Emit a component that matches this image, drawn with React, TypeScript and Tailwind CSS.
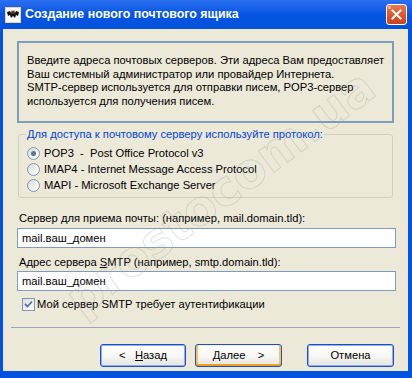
import React from 'react';

const font = "font-['Liberation_Sans',Arial,sans-serif]";

function BatIcon() {
  return (
    <svg width="16" height="16" viewBox="0 0 16 16" className="shrink-0">
      <rect x="0" y="0" width="16" height="16" fill="#fff" />
      <rect x="0.5" y="0.5" width="15" height="15" fill="none" stroke="#f0a020" strokeDasharray="1 1" />
      <path
        d="M2 5 L5 4 L6 6 L7 3 L8 5 L9 3 L10 6 L11 4 L14 5 L13 9 L11 8 L10 11 L8 9 L6 11 L5 8 L3 9 Z"
        fill="#111"
      />
      <circle cx="7" cy="6" r="0.6" fill="#f0a020" />
      <circle cx="9" cy="6" r="0.6" fill="#f0a020" />
    </svg>
  );
}

function CloseButton() {
  return (
    <div className="w-[21px] h-[21px] rounded-[3px] border border-white bg-gradient-to-b from-[#e8784f] via-[#e0582b] to-[#c94418] flex items-center justify-center relative">
      <div className="absolute left-[1px] top-[1px] w-[3px] h-[3px] bg-[#f5b080]" />
      <svg width="11" height="11" viewBox="0 0 11 11">
        <path d="M1.5 1.5 L9.5 9.5 M9.5 1.5 L1.5 9.5" stroke="#fff" strokeWidth="2" strokeLinecap="square" />
      </svg>
    </div>
  );
}

function Radio({ checked, label }: { checked?: boolean; label: string }) {
  return (
    <div className="h-[16px] flex items-center">
      <div className="w-[13px] h-[13px] rounded-full border border-[#7b98c4] bg-gradient-to-br from-[#dcdcd5] to-white flex items-center justify-center shrink-0">
        {checked && <div className="w-[5px] h-[5px] rounded-full bg-[#5f7393]" />}
      </div>
      <span className="ml-[4px] whitespace-pre">{label}</span>
    </div>
  );
}

function XpButton({
  children,
  hot,
}: {
  children: React.ReactNode;
  hot?: boolean;
}) {
  return (
    <div
      className={
        'w-[87px] h-[23px] rounded-[3px] border border-[#1b4fc9] bg-gradient-to-b from-white via-[#f7f7f4] to-[#e6e5de] flex items-center justify-center whitespace-pre ' +
        (hot
          ? 'shadow-[inset_0_-2px_0_#e8a21b,inset_2px_0_0_#f8c45c,inset_-2px_0_0_#f8c45c,inset_0_1px_0_#fff0cf]'
          : 'shadow-[inset_0_0_0_1px_#8fb0f4]')
      }
    >
      {children}
    </div>
  );
}

export default function App() {
  return (
    <div className={`w-[412px] h-[378px] bg-[#0453e0] relative overflow-hidden text-[11.2px] leading-[13px] text-black ${font}`}>
      {/* title bar */}
      <div className="h-[29px] flex items-center pl-[5px] pr-[5px] bg-gradient-to-b from-[#2a6ff0] via-[#0455e3] to-[#0452dc]">
        <BatIcon />
        <span className="ml-[4px] text-white font-bold text-[12.4px]">
          Создание нового почтового ящика
        </span>
        <div className="ml-auto">
          <CloseButton />
        </div>
      </div>

      {/* client */}
      <div className="ml-[3px] mr-[4px] h-[342px] bg-[#ece9d8] flex flex-col pt-[12px] px-[14px]">
        <div className="h-[82px] border-2 border-[#7f9db9] pl-[8px] pt-[11px] leading-[13.5px]">
          <p>Введите адреса почтовых серверов. Эти адреса Вам предоставляет</p>
          <p>Ваш системный администратор или провайдер Интернета.</p>
          <p>SMTP-сервер используется для отправки писем, POP3-сервер</p>
          <p>используется для получения писем.</p>
        </div>

        <fieldset className="mt-[5px] mx-[1px] border border-[#d0d0bf] rounded-[3px] pl-[8px] pt-[4px] pb-[4px]">
          <legend className="px-[1px] -ml-[1px] text-[#0046d5] leading-[13px]">
            <span className="underline">Д</span>ля доступа к почтовому серверу используйте протокол:
          </legend>
          <Radio checked label="POP3  -  Post Office Protocol v3" />
          <Radio label="IMAP4 - Internet Message Access Protocol" />
          <Radio label="MAPI - Microsoft Exchange Server" />
        </fieldset>

        <div className="mt-[14px] pl-[2px]">
          Сервер для приема почты: (например, mail.domain.tld):
        </div>
        <div className="mt-[3px] h-[20px] w-[379px] border border-[#7f9db9] bg-white pl-[4px] flex items-center">
          mail.ваш_домен
        </div>

        <div className="mt-[8px] pl-[2px]">
          Адрес сервера <span className="underline">S</span>MTP (например, smtp.domain.tld):
        </div>
        <div className="mt-[2px] h-[20px] w-[379px] border border-[#7f9db9] bg-white pl-[4px] flex items-center">
          mail.ваш_домен
        </div>

        <div className="mt-[7px] h-[13px] flex items-center pl-[5px]">
          <div className="w-[13px] h-[13px] border border-[#7b98c4] bg-gradient-to-br from-[#dcdcd5] to-white flex items-center justify-center shrink-0">
            <svg width="9" height="9" viewBox="0 0 9 9">
              <path d="M1 4 L3.5 6.5 L8 1.5" stroke="#5272a8" strokeWidth="1.8" fill="none" />
            </svg>
          </div>
          <span className="ml-[2px]">Мой сервер SMTP требует аутентификации</span>
        </div>

        <div className="mt-[16px] -mx-[6px] h-[1px] bg-[#9aa6b8]" />

        <div className="mt-[16px] flex pl-[83px]">
          <XpButton>
            {'<   '}
            <span className="underline">Н</span>азад
          </XpButton>
          <div className="ml-[9px]">
            <XpButton hot>
              <span className="underline">Д</span>алее{'    >'}
            </XpButton>
          </div>
          <div className="ml-[25px]">
            <XpButton>Отмена</XpButton>
          </div>
        </div>
      </div>

      {/* watermark */}
      <div className="absolute left-[10px] top-[168px] w-[420px] text-center rotate-[-37deg] pointer-events-none text-[48px] font-bold leading-[48px] text-transparent [-webkit-text-stroke:1px_rgba(170,170,170,0.35)] font-['DejaVu_Sans',sans-serif]">
        prostocom.ua
      </div>
    </div>
  );
}
